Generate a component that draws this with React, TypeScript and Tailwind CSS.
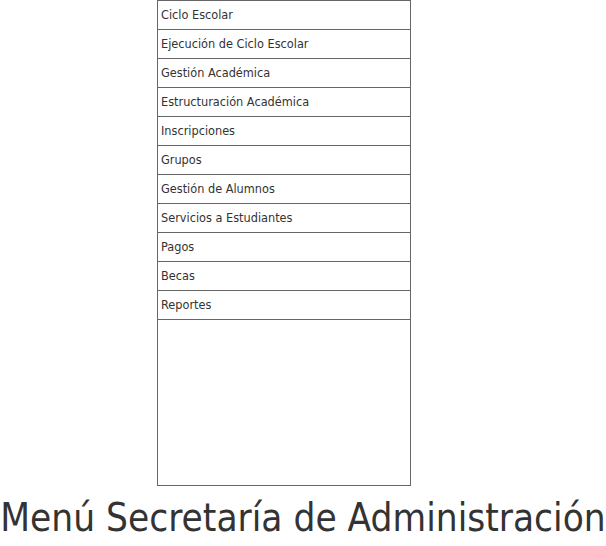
import React from "react";

const items = [
  "Ciclo Escolar",
  "Ejecución de Ciclo Escolar",
  "Gestión Académica",
  "Estructuración Académica",
  "Inscripciones",
  "Grupos",
  "Gestión de Alumnos",
  "Servicios a Estudiantes",
  "Pagos",
  "Becas",
  "Reportes",
];

export default function App() {
  return (
    <div className="w-[606px] h-[546px] bg-white text-[#333] font-['DejaVu_Sans_Condensed','DejaVu_Sans',sans-serif]">
      {/* Menu panel */}
      <div className="ml-[157px] w-[254px] h-[486px] border border-[#666] bg-white">
        {items.map((item) => (
          <div
            key={item}
            className="h-[29px] border-b border-[#666] px-[3px] flex items-center text-[12.6px] leading-none"
          >
            {item}
          </div>
        ))}
      </div>

      {/* Title */}
      <h1 className="text-center text-[38.4px] leading-[64px] whitespace-nowrap">
        Menú Secretaría de Administración
      </h1>
    </div>
  );
}
